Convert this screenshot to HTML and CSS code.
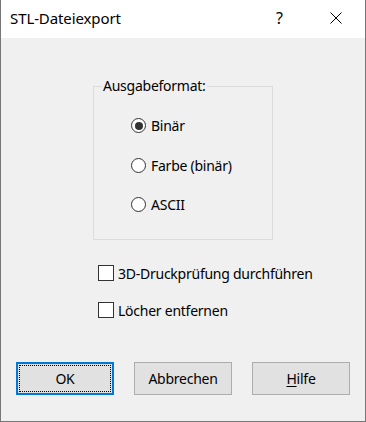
FILE: index.html
```html
<!DOCTYPE html>
<html lang="de">
<head>
<meta charset="utf-8">
<title>STL-Dateiexport</title>
<link rel="stylesheet" href="styles.css">
</head>
<body>
<div class="window">
  <div class="titlebar">
    <span class="title">STL-Dateiexport</span>
    <span class="help">?</span>
    <span class="close">
      <svg width="12" height="12" viewBox="0 0 12 12"><path d="M0.5 0.5 L11.5 11.5 M11.5 0.5 L0.5 11.5" stroke="#000" stroke-width="1" fill="none"/></svg>
    </span>
  </div>
  <div class="content">
    <fieldset class="group">
      <legend class="legend">Ausgabeformat:</legend>
      <div class="radios">
        <div class="radio-row"><span class="radio checked"></span><span class="label">Binär</span></div>
        <div class="radio-row"><span class="radio"></span><span class="label">Farbe (binär)</span></div>
        <div class="radio-row"><span class="radio"></span><span class="label">ASCII</span></div>
      </div>
    </fieldset>
    <div class="checks">
      <div class="check-row"><span class="box"></span><span class="label">3D-Druckprüfung durchführen</span></div>
      <div class="check-row"><span class="box"></span><span class="label">Löcher entfernen</span></div>
    </div>
    <div class="buttons">
      <button class="btn default"><span class="focus">OK</span></button>
      <button class="btn">Abbrechen</button>
      <button class="btn"><span><u>H</u>ilfe</span></button>
    </div>
  </div>
</div>
</body>
</html>
```

FILE: styles.css
```css
html, body {
  margin: 0;
  padding: 0;
  background: #f0f0f0;
}
body {
  font-family: "Noto Sans", "Open Sans", sans-serif;
  font-size: 14px;
  letter-spacing: -0.25px;
  color: #000;
}
.window {
  width: 366px;
  height: 422px;
  box-sizing: border-box;
  border: 1px solid #777;
  border-top: none;
  background: #f0f0f0;
  display: flex;
  flex-direction: column;
}
.titlebar {
  height: 38px;
  background: #fff;
  display: flex;
  align-items: center;
  padding-left: 9px;
  flex: none;
}
.title {
  font-size: 15px;
  letter-spacing: -0.1px;
  flex: 1;
  position: relative;
  top: -1px;
}
.help {
  font-size: 16px;
  width: 20px;
  margin-right: 34px;
  position: relative;
  top: -1px;
}
.close {
  width: 12px;
  height: 12px;
  margin-right: 23px;
  display: flex;
  position: relative;
  top: -1px;
}
.content {
  flex: 1;
  display: flex;
  flex-direction: column;
}
.group {
  margin: 38px 0 0 92px;
  width: 180px;
  box-sizing: border-box;
  height: 164px;
  border: 1px solid #dcdcdc;
  padding: 0 0 0 8px;
}
.legend {
  padding: 0 1px;
  line-height: 20px;
}
.radios {
  display: flex;
  flex-direction: column;
  padding: 10px 0 0 29px;
}
.radio-row {
  height: 39.5px;
  display: flex;
  align-items: center;
}
.radio {
  width: 15px;
  height: 15px;
  box-sizing: border-box;
  border: 1px solid #333;
  border-radius: 50%;
  background: #fff;
  margin-right: 5px;
  display: flex;
  align-items: center;
  justify-content: center;
  flex: none;
}
.radio.checked::after {
  content: "";
  width: 8px;
  height: 8px;
  border-radius: 50%;
  background: #333;
}
.checks {
  margin: 23px 0 0 97px;
  display: flex;
  flex-direction: column;
  gap: 17px;
}
.check-row {
  height: 20px;
  display: flex;
  align-items: center;
}
.box {
  width: 16px;
  height: 16px;
  box-sizing: border-box;
  border: 1px solid #333;
  background: #fff;
  margin-right: 4px;
  flex: none;
}
.buttons {
  margin: 42px 0 0 15px;
  display: flex;
  gap: 20px;
}
.btn {
  width: 98px;
  height: 33px;
  box-sizing: border-box;
  border: 1px solid #adadad;
  background: #e1e1e1;
  font-family: inherit;
  font-size: 14px;
  letter-spacing: inherit;
  color: #000;
  padding: 0;
  display: flex;
  align-items: center;
  justify-content: center;
}
.btn.default {
  border: 2px solid #0078d7;
  padding: 1px;
}
.btn .focus {
  flex: 1;
  align-self: stretch;
  display: flex;
  align-items: center;
  justify-content: center;
  border: 1px dotted #000;
}
u {
  text-decoration-thickness: 1px;
  text-underline-offset: 2px;
}
```
